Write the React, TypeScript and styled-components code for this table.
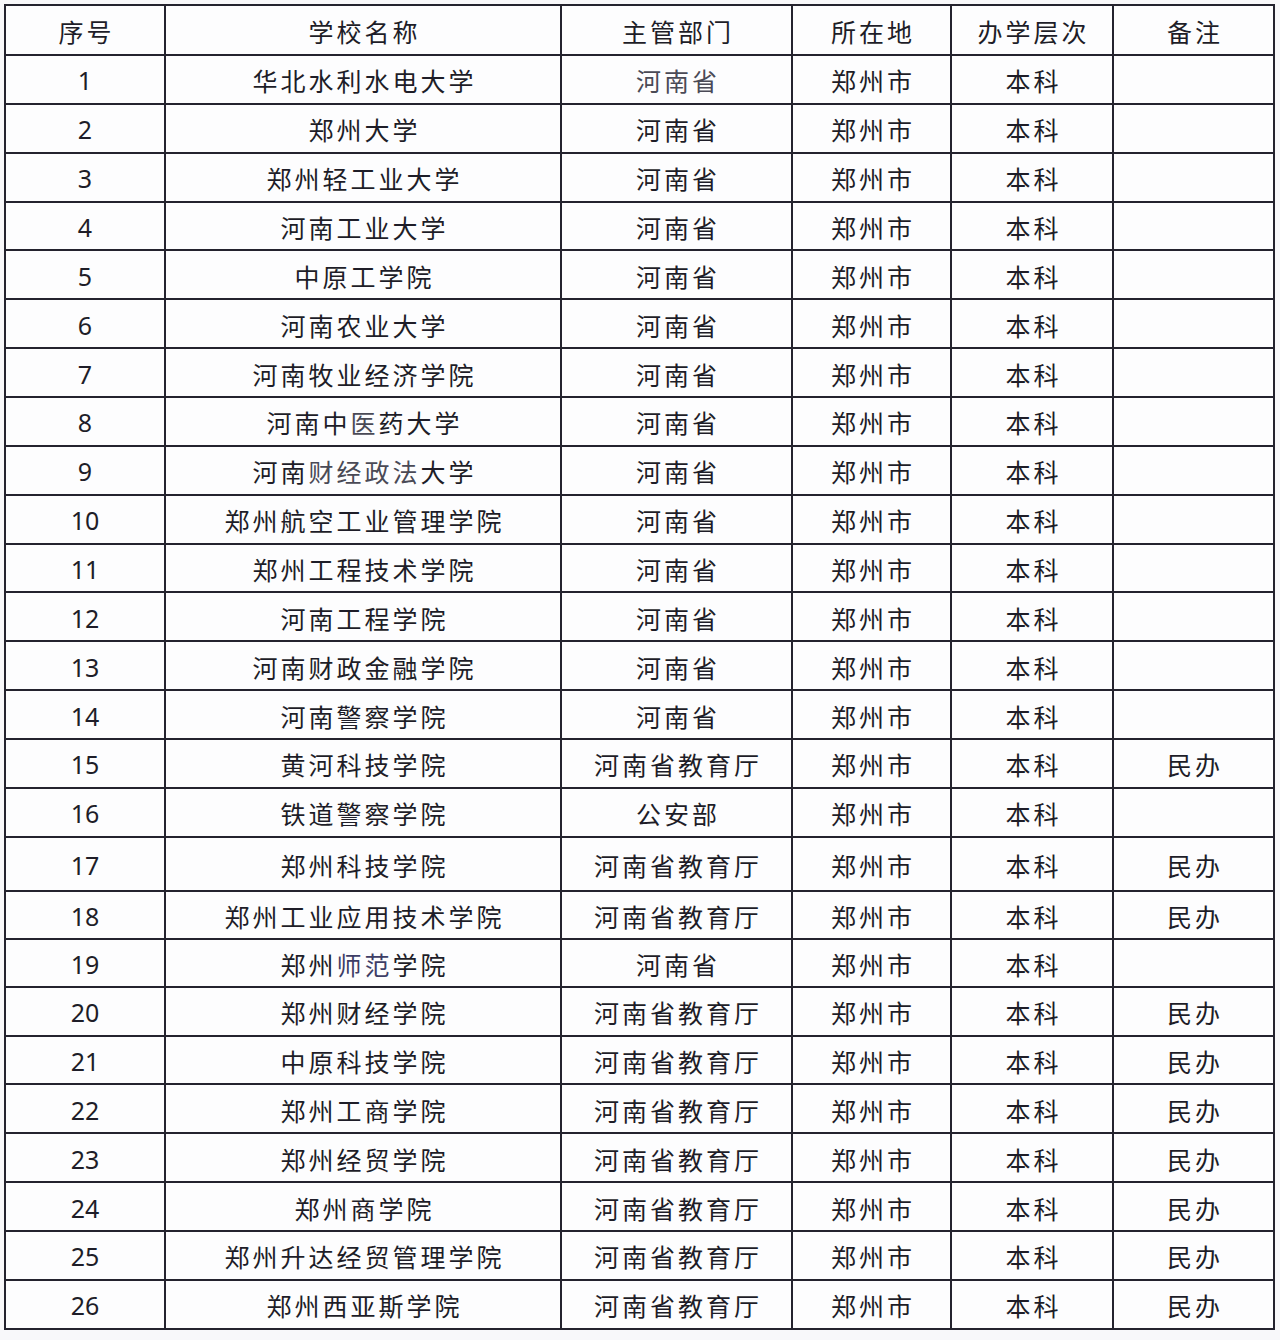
import React from "react";
import styled, { createGlobalStyle } from "styled-components";

const Global = createGlobalStyle`
  html, body { margin: 0; padding: 0; background: #f8f8fa; }
  body { font-family: "Noto Sans CJK SC", "Noto Sans", sans-serif; }
`;

const Page = styled.div`
  width: 1280px;
  height: 1340px;
  padding: 4px 0 0 4px;
  box-sizing: border-box;
  background: #f8f8fa;
`;

const Grid = styled.div<{ $rows: string }>`
  display: grid;
  grid-template-columns: 158px 394px 229px 157px 160px 159px;
  grid-template-rows: ${(p) => p.$rows};
  gap: 2px;
  padding: 2px;
  width: max-content;
  background: #24232e;
`;

const Cell = styled.div<{ $num?: boolean; $head?: boolean }>`
  background: #fdfdfe;
  display: flex;
  align-items: center;
  justify-content: center;
  padding-top: ${(p) => (p.$head ? "1px" : "2px")};
  padding-left: ${(p) => (p.$num ? "0" : "3px")};
  box-sizing: border-box;
  font-size: ${(p) => (p.$num ? "25px" : "25px")};
  letter-spacing: ${(p) => (p.$num ? "0" : "3px")};
  color: #1e1d28;
  font-family: ${(p) =>
    p.$num
      ? `"Noto Sans", "Noto Sans CJK SC", sans-serif`
      : `"Noto Sans CJK SC", "Noto Sans", sans-serif`};
  white-space: nowrap;
`;

const Faint = styled.span<{ $blue?: boolean }>`
  color: ${(p) => (p.$blue ? "#3d3d66" : "#4a4a56")};
`;

type Row = {
  name: React.ReactNode;
  dept: string;
  note?: string;
  h?: number;
  deptFaint?: boolean;
};

const P = "河南省";
const E = "河南省教育厅";

const rows: Row[] = [
  { name: "华北水利水电大学", dept: P, deptFaint: true },
  { name: "郑州大学", dept: P },
  { name: "郑州轻工业大学", dept: P },
  { name: "河南工业大学", dept: P },
  { name: "中原工学院", dept: P },
  { name: "河南农业大学", dept: P },
  { name: "河南牧业经济学院", dept: P },
  {
    name: (
      <>
        河南中<Faint>医</Faint>药大学
      </>
    ),
    dept: P,
  },
  {
    name: (
      <>
        河南<Faint>财经政法</Faint>大学
      </>
    ),
    dept: P,
  },
  { name: "郑州航空工业管理学院", dept: P },
  { name: "郑州工程技术学院", dept: P },
  { name: "河南工程学院", dept: P },
  { name: "河南财政金融学院", dept: P },
  { name: "河南警察学院", dept: P },
  { name: "黄河科技学院", dept: E, note: "民办" },
  { name: "铁道警察学院", dept: "公安部" },
  { name: "郑州科技学院", dept: E, note: "民办", h: 52 },
  { name: "郑州工业应用技术学院", dept: E, note: "民办", h: 46 },
  {
    name: (
      <>
        郑州<Faint $blue>师范</Faint>学院
      </>
    ),
    dept: P,
    h: 46,
  },
  { name: "郑州财经学院", dept: E, note: "民办" },
  { name: "中原科技学院", dept: E, note: "民办" },
  { name: "郑州工商学院", dept: E, note: "民办" },
  { name: "郑州经贸学院", dept: E, note: "民办" },
  { name: "郑州商学院", dept: E, note: "民办" },
  { name: "郑州升达经贸管理学院", dept: E, note: "民办" },
  { name: "郑州西亚斯学院", dept: E, note: "民办" },
];

const headers = ["序号", "学校名称", "主管部门", "所在地", "办学层次", "备注"];

export default function App() {
  const template = ["48px", ...rows.map((r) => `${r.h ?? 46.87}px`)].join(" ");
  return (
    <Page>
      <Global />
      <Grid $rows={template}>
        {headers.map((h) => (
          <Cell key={h} $head>
            {h}
          </Cell>
        ))}
        {rows.map((r, i) => (
          <React.Fragment key={i}>
            <Cell $num>{i + 1}</Cell>
            <Cell>{r.name}</Cell>
            <Cell>{r.deptFaint ? <Faint>{r.dept}</Faint> : r.dept}</Cell>
            <Cell>郑州市</Cell>
            <Cell>本科</Cell>
            <Cell>{r.note ?? ""}</Cell>
          </React.Fragment>
        ))}
      </Grid>
    </Page>
  );
}
